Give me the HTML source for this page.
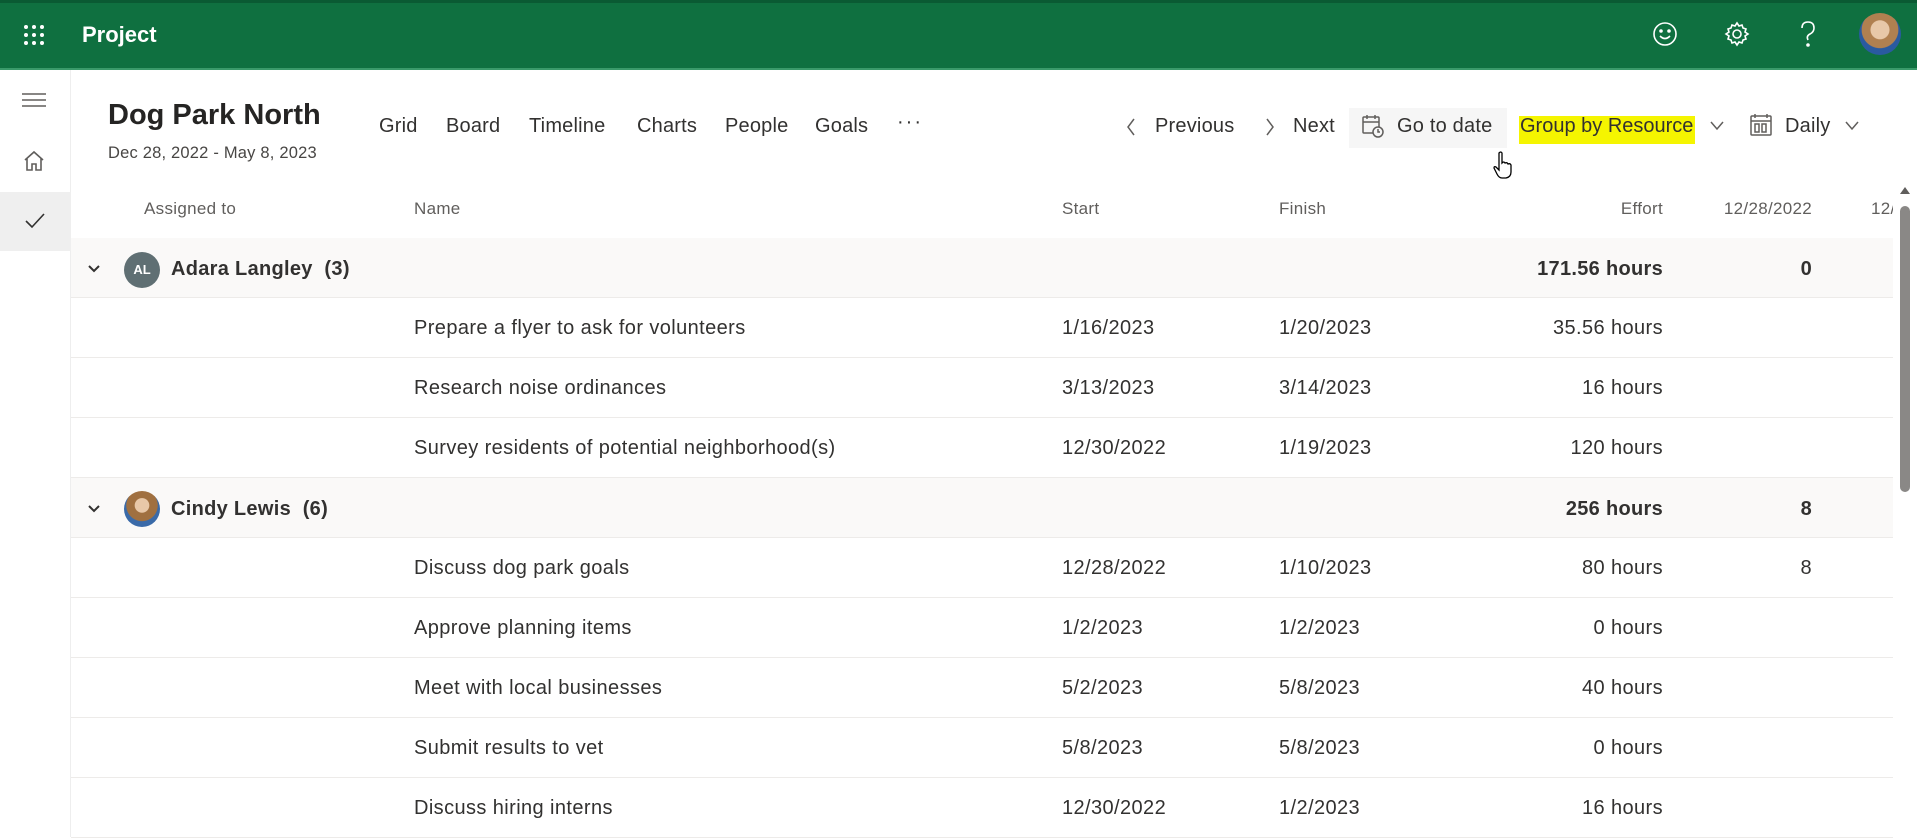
<!DOCTYPE html>
<html><head><meta charset="utf-8"><style>
*{margin:0;padding:0;box-sizing:border-box}
body{width:1917px;height:837px;overflow:hidden;background:#fff;font-family:"Liberation Sans",sans-serif;color:#323130;position:relative}
.a{position:absolute;white-space:nowrap}
.hdr{left:0;top:0;width:1917px;height:70px;background:#0f7040;border-top:3px solid #0a5a33;border-bottom:2px solid #3a9a6a}
.rail{left:0;top:70px;width:71px;height:767px;background:#fff;border-right:1px solid #eee}
.tab{top:115px;font-size:20px;letter-spacing:0.2px;color:#323130}
.col{top:199px;font-size:17px;letter-spacing:0.3px;color:#605e5c}
.row{left:71px;width:1822px;height:60px;border-bottom:1px solid #edebe9}
.grp{background:#faf9f8}
.t{font-size:20px;letter-spacing:0.4px;color:#323130}
.b{font-size:20px;font-weight:bold;letter-spacing:0.3px;color:#323130}
</style></head><body>
<div class="a hdr"></div>
<svg class="a" style="left:23px;top:24px" width="22" height="22" fill="#fff"><g>
<circle cx="3" cy="3" r="2"/><circle cx="11" cy="3" r="2"/><circle cx="19" cy="3" r="2"/>
<circle cx="3" cy="11" r="2"/><circle cx="11" cy="11" r="2"/><circle cx="19" cy="11" r="2"/>
<circle cx="3" cy="19" r="2"/><circle cx="11" cy="19" r="2"/><circle cx="19" cy="19" r="2"/></g></svg>
<div class="a" style="left:82px;top:22px;font-size:22px;font-weight:bold;color:#fff">Project</div>
<svg class="a" style="left:1652px;top:21px" width="26" height="26" fill="none" stroke="#fff" stroke-width="1.6"><circle cx="13" cy="13" r="11"/><circle cx="9" cy="10" r="1" fill="#fff"/><circle cx="17" cy="10" r="1" fill="#fff"/><path d="M8 15q5 5 10 0"/></svg>
<svg class="a" style="left:1724px;top:21px" width="26" height="26" fill="none" stroke="#fff" stroke-width="1.6"><circle cx="13" cy="13" r="4"/><path d="M13 2l2 3 3-1 1 3 3 1-1 3 3 2-3 2 1 3-3 1-1 3-3-1-2 3-2-3-3 1-1-3-3-1 1-3-3-2 3-2-1-3 3-1 1-3 3 1z"/></svg>
<svg class="a" style="left:1798px;top:20px" width="20" height="28" fill="none" stroke="#fff" stroke-width="1.6"><path d="M4 8q0-6 6-6t6 6q0 4-4 6t-2 6"/><circle cx="10" cy="25" r="1" fill="#fff"/></svg>
<div class="a" style="left:1859px;top:13px;width:42px;height:42px;border-radius:50%;background:radial-gradient(circle at 50% 40%,#e8c8a8 0 28%,#b08050 30% 55%,#2a5aa0 57%)"></div>

<div class="a rail"></div>
<svg class="a" style="left:22px;top:92px" width="24" height="16" stroke="#605e5c" stroke-width="1.5"><path d="M0 2h24M0 8h24M0 14h24"/></svg>
<svg class="a" style="left:23px;top:150px" width="22" height="22" fill="none" stroke="#605e5c" stroke-width="1.6"><path d="M2 10L11 2l9 8M4 8v12h5v-6h4v6h5V8"/></svg>
<div class="a" style="left:0;top:192px;width:71px;height:59px;background:#efefef"></div>
<svg class="a" style="left:24px;top:212px" width="22" height="18" fill="none" stroke="#323130" stroke-width="1.6"><path d="M2 9l6 6L20 2"/></svg>

<div class="a" style="left:108px;top:99px;font-size:29px;font-weight:bold;color:#252423">Dog Park North</div>
<div class="a" style="left:108px;top:144px;font-size:16.5px;letter-spacing:0.2px;color:#484644">Dec 28, 2022 - May 8, 2023</div>
<div class="a tab" style="left:379px">Grid</div>
<div class="a tab" style="left:446px">Board</div>
<div class="a tab" style="left:529px">Timeline</div>
<div class="a tab" style="left:637px">Charts</div>
<div class="a tab" style="left:725px">People</div>
<div class="a tab" style="left:815px">Goals</div>
<div class="a tab" style="left:897px;top:111px;letter-spacing:2px">···</div>

<svg class="a" style="left:1125px;top:117px" width="12" height="20" fill="none" stroke="#605e5c" stroke-width="1.5"><path d="M9 2L3 10l6 8"/></svg>
<div class="a tab" style="left:1155px">Previous</div>
<svg class="a" style="left:1264px;top:117px" width="12" height="20" fill="none" stroke="#605e5c" stroke-width="1.5"><path d="M3 2l6 8-6 8"/></svg>
<div class="a tab" style="left:1293px">Next</div>
<div class="a" style="left:1349px;top:108px;width:158px;height:40px;background:#f6f6f6"></div>
<svg class="a" style="left:1361px;top:113px" width="24" height="26" fill="none" stroke="#605e5c" stroke-width="1.5"><rect x="2" y="4" width="16" height="16" rx="1"/><path d="M2 9h16M6 2v4M14 2v4"/><circle cx="17" cy="19" r="5" fill="#f6f6f6"/><path d="M17 16v3h2"/></svg>
<div class="a tab" style="left:1397px">Go to date</div>
<div class="a" style="left:1519px;top:116px;width:176px;height:28px;background:#f5f500"></div>
<div class="a tab" style="left:1520px;letter-spacing:0">Group by Resource</div>
<svg class="a" style="left:1709px;top:120px" width="16" height="12" fill="none" stroke="#605e5c" stroke-width="1.5"><path d="M2 2l6 7 6-7"/></svg>
<svg class="a" style="left:1749px;top:113px" width="24" height="24" fill="none" stroke="#605e5c" stroke-width="1.5"><rect x="2" y="3" width="20" height="19" rx="1"/><path d="M2 8h20M6 1v4M18 1v4M6 11h4v8H6zM13 11h4v8h-4z"/></svg>
<div class="a tab" style="left:1785px">Daily</div>
<svg class="a" style="left:1844px;top:120px" width="16" height="12" fill="none" stroke="#605e5c" stroke-width="1.5"><path d="M2 2l6 7 6-7"/></svg>
<svg class="a" style="left:1492px;top:150px" width="24" height="30" fill="#fff" stroke="#000" stroke-width="1.3"><path d="M7 3q2-2 3 0v10q2-2 3 0q2-1 3 1q2-1 3 1v7q0 5-5 6h-4q-3 0-5-4l-3-6q0-2 2-1l3 3z"/></svg>

<div class="a col" style="left:144px">Assigned to</div>
<div class="a col" style="left:414px">Name</div>
<div class="a col" style="left:1062px">Start</div>
<div class="a col" style="left:1279px">Finish</div>
<div class="a col" style="right:254px">Effort</div>
<div class="a col" style="right:105px">12/28/2022</div>
<div class="a col" style="left:1871px">12/</div>

<div class="a row grp" style="top:238px"></div>
<div class="a row" style="top:298px"></div>
<div class="a row" style="top:358px"></div>
<div class="a row" style="top:418px"></div>
<div class="a row grp" style="top:478px"></div>
<div class="a row" style="top:538px"></div>
<div class="a row" style="top:598px"></div>
<div class="a row" style="top:658px"></div>
<div class="a row" style="top:718px"></div>
<div class="a row" style="top:778px"></div>

<svg class="a" style="left:87px;top:264px" width="14" height="10" fill="none" stroke="#323130" stroke-width="2"><path d="M2 2l5 5 5-5"/></svg>
<div class="a" style="left:124px;top:252px;width:36px;height:36px;border-radius:50%;background:#5f6f73;color:#fff;font-size:13px;font-weight:bold;text-align:center;line-height:36px">AL</div>
<div class="a b" style="left:171px;top:258px">Adara Langley&nbsp;&nbsp;(3)</div>
<div class="a b" style="right:254px;top:258px">171.56 hours</div>
<div class="a b" style="right:105px;top:258px">0</div>

<svg class="a" style="left:87px;top:504px" width="14" height="10" fill="none" stroke="#323130" stroke-width="2"><path d="M2 2l5 5 5-5"/></svg>
<div class="a" style="left:124px;top:491px;width:36px;height:36px;border-radius:50%;background:radial-gradient(circle at 50% 40%,#e8c8a8 0 25%,#a07040 27% 55%,#3a6aa8 57%)"></div>
<div class="a b" style="left:171px;top:498px">Cindy Lewis&nbsp;&nbsp;(6)</div>
<div class="a b" style="right:254px;top:498px">256 hours</div>
<div class="a b" style="right:105px;top:498px">8</div>

<div class="a t" style="left:414px;top:317px">Prepare a flyer to ask for volunteers</div>
<div class="a t" style="left:1062px;top:317px">1/16/2023</div><div class="a t" style="left:1279px;top:317px">1/20/2023</div><div class="a t" style="right:254px;top:317px">35.56 hours</div>
<div class="a t" style="left:414px;top:377px">Research noise ordinances</div>
<div class="a t" style="left:1062px;top:377px">3/13/2023</div><div class="a t" style="left:1279px;top:377px">3/14/2023</div><div class="a t" style="right:254px;top:377px">16 hours</div>
<div class="a t" style="left:414px;top:437px">Survey residents of potential neighborhood(s)</div>
<div class="a t" style="left:1062px;top:437px">12/30/2022</div><div class="a t" style="left:1279px;top:437px">1/19/2023</div><div class="a t" style="right:254px;top:437px">120 hours</div>
<div class="a t" style="left:414px;top:557px">Discuss dog park goals</div>
<div class="a t" style="left:1062px;top:557px">12/28/2022</div><div class="a t" style="left:1279px;top:557px">1/10/2023</div><div class="a t" style="right:254px;top:557px">80 hours</div><div class="a t" style="right:105px;top:557px">8</div>
<div class="a t" style="left:414px;top:617px">Approve planning items</div>
<div class="a t" style="left:1062px;top:617px">1/2/2023</div><div class="a t" style="left:1279px;top:617px">1/2/2023</div><div class="a t" style="right:254px;top:617px">0 hours</div>
<div class="a t" style="left:414px;top:677px">Meet with local businesses</div>
<div class="a t" style="left:1062px;top:677px">5/2/2023</div><div class="a t" style="left:1279px;top:677px">5/8/2023</div><div class="a t" style="right:254px;top:677px">40 hours</div>
<div class="a t" style="left:414px;top:737px">Submit results to vet</div>
<div class="a t" style="left:1062px;top:737px">5/8/2023</div><div class="a t" style="left:1279px;top:737px">5/8/2023</div><div class="a t" style="right:254px;top:737px">0 hours</div>
<div class="a t" style="left:414px;top:797px">Discuss hiring interns</div>
<div class="a t" style="left:1062px;top:797px">12/30/2022</div><div class="a t" style="left:1279px;top:797px">1/2/2023</div><div class="a t" style="right:254px;top:797px">16 hours</div>

<div class="a" style="left:1893px;top:180px;width:24px;height:657px;background:#fff"></div>
<svg class="a" style="left:1899px;top:186px" width="12" height="9"><path d="M1 8l5-7 5 7z" fill="#605e5c"/></svg>
<div class="a" style="left:1900px;top:206px;width:10px;height:286px;border-radius:5px;background:#8a8886"></div>
</body></html>
